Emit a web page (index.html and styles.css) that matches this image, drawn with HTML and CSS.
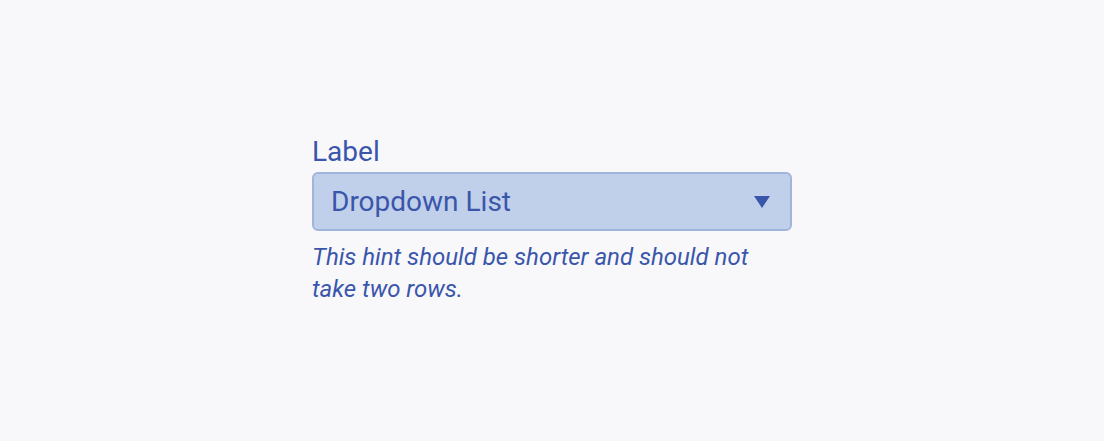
FILE: index.html
```html
<!DOCTYPE html>
<html lang="en">
<head>
<meta charset="utf-8">
<title>Dropdown</title>
<link rel="stylesheet" href="styles.css">
</head>
<body>
<main class="page">
  <div class="field">
    <label class="field-label" for="dd">Label</label>
    <div class="select" id="dd" role="combobox" aria-expanded="false">
      <span class="select-value">Dropdown List</span>
      <svg class="select-caret" width="16" height="12" viewBox="0 0 16 12" aria-hidden="true"><path d="M0 0H16L8 12Z" fill="currentColor"/></svg>
    </div>
    <p class="field-hint">This hint should be shorter and should not take two rows.</p>
  </div>
</main>
</body>
</html>
```

FILE: styles.css
```css
html, body {
  margin: 0;
  padding: 0;
  height: 100%;
}
body {
  background: #f8f8fb;
  font-family: Roboto, "Noto Sans", sans-serif;
  color: #3a56ab;
}
.page {
  height: 100%;
  display: flex;
  align-items: center;
  justify-content: center;
}
.field {
  width: 480px;
  display: flex;
  flex-direction: column;
}
.field-label {
  font-size: 28px;
  line-height: 32px;
  margin-bottom: 4px;
}
.select {
  box-sizing: border-box;
  height: 59px;
  border: 2px solid #a0b4dc;
  border-radius: 6px;
  background: #c1d0ea;
  display: flex;
  align-items: center;
  justify-content: space-between;
  padding: 0 20px 0 17px;
}
.select-value {
  font-size: 28px;
}
.select-caret {
  color: #3a56ab;
}
.field-hint {
  margin: 10px 0 0;
  font-style: italic;
  font-size: 24px;
  line-height: 32px;
}
```
